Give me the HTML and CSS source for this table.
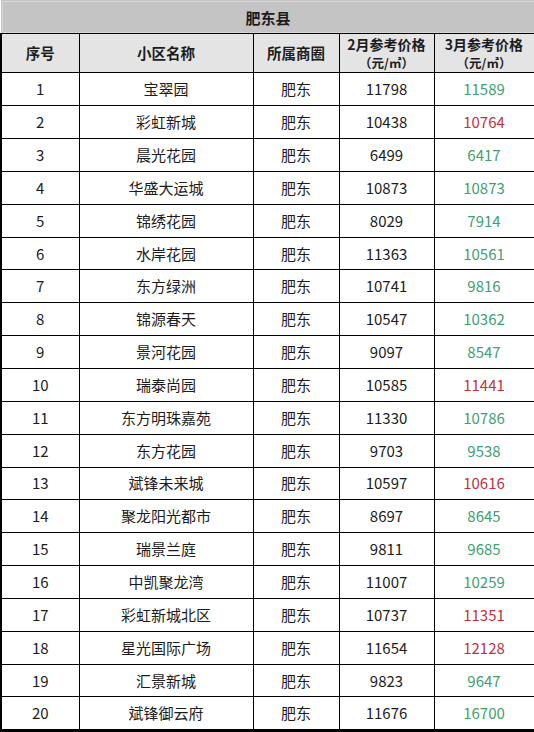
FILE: index.html
```html
<!DOCTYPE html>
<html lang="zh">
<head>
<meta charset="utf-8">
<title>肥东县</title>
<link rel="stylesheet" href="styles.css">
</head>
<body>
<table class="price-table">
  <colgroup>
    <col class="c1"><col class="c2"><col class="c3"><col class="c4"><col class="c5">
  </colgroup>
  <thead>
    <tr class="title-row"><th colspan="5">肥东县</th></tr>
    <tr class="head-row">
      <th>序号</th><th>小区名称</th><th>所属商圈</th>
      <th><span class="h1">2月参考价格</span><span class="unit">（元/㎡）</span></th>
      <th><span class="h1">3月参考价格</span><span class="unit">（元/㎡）</span></th>
    </tr>
  </thead>
  <tbody>
    <tr><td>1</td><td>宝翠园</td><td>肥东</td><td>11798</td><td class="down">11589</td></tr>
    <tr><td>2</td><td>彩虹新城</td><td>肥东</td><td>10438</td><td class="up">10764</td></tr>
    <tr><td>3</td><td>晨光花园</td><td>肥东</td><td>6499</td><td class="down">6417</td></tr>
    <tr><td>4</td><td>华盛大运城</td><td>肥东</td><td>10873</td><td class="down">10873</td></tr>
    <tr><td>5</td><td>锦绣花园</td><td>肥东</td><td>8029</td><td class="down">7914</td></tr>
    <tr><td>6</td><td>水岸花园</td><td>肥东</td><td>11363</td><td class="down">10561</td></tr>
    <tr><td>7</td><td>东方绿洲</td><td>肥东</td><td>10741</td><td class="down">9816</td></tr>
    <tr><td>8</td><td>锦源春天</td><td>肥东</td><td>10547</td><td class="down">10362</td></tr>
    <tr><td>9</td><td>景河花园</td><td>肥东</td><td>9097</td><td class="down">8547</td></tr>
    <tr><td>10</td><td>瑞泰尚园</td><td>肥东</td><td>10585</td><td class="up">11441</td></tr>
    <tr><td>11</td><td>东方明珠嘉苑</td><td>肥东</td><td>11330</td><td class="down">10786</td></tr>
    <tr><td>12</td><td>东方花园</td><td>肥东</td><td>9703</td><td class="down">9538</td></tr>
    <tr><td>13</td><td>斌锋未来城</td><td>肥东</td><td>10597</td><td class="up">10616</td></tr>
    <tr><td>14</td><td>聚龙阳光都市</td><td>肥东</td><td>8697</td><td class="down">8645</td></tr>
    <tr><td>15</td><td>瑞景兰庭</td><td>肥东</td><td>9811</td><td class="down">9685</td></tr>
    <tr><td>16</td><td>中凯聚龙湾</td><td>肥东</td><td>11007</td><td class="down">10259</td></tr>
    <tr><td>17</td><td>彩虹新城北区</td><td>肥东</td><td>10737</td><td class="up">11351</td></tr>
    <tr><td>18</td><td>星光国际广场</td><td>肥东</td><td>11654</td><td class="up">12128</td></tr>
    <tr><td>19</td><td>汇景新城</td><td>肥东</td><td>9823</td><td class="down">9647</td></tr>
    <tr><td>20</td><td>斌锋御云府</td><td>肥东</td><td>11676</td><td class="down">16700</td></tr>
  </tbody>
</table>
</body>
</html>
```
FILE: styles.css
```css
html, body {
  margin: 0;
  padding: 0;
  background: #ffffff;
}
body {
  font-family: "Noto Sans CJK SC", "Noto Sans", sans-serif;
  color: #1c1c1c;
}
.price-table {
  width: 534px;
  table-layout: fixed;
  border-collapse: collapse;
  font-size: 15px;
}
.c1 { width: 78px; }
.c2 { width: 174px; }
.c3 { width: 86px; }
.c4 { width: 95px; }
.c5 { width: 101px; }

.price-table th,
.price-table td {
  border: 1px solid #000;
  text-align: center;
  vertical-align: middle;
  padding: 0;
}
.title-row th {
  height: 32px;
  background: #c4c4c4;
  border-bottom: 1px solid #000;
  font-weight: bold;
  font-size: 15px;
  box-shadow: inset 0 0 0 1px #d6d6d6;
}
.head-row th {
  height: 37px;
  background: #e4e4e4;
  font-weight: bold;
  font-size: 14.5px;
  line-height: 20px;
}
.h1 {
  display: block;
  font-size: 14px;
  line-height: 20.3px;
}
.unit {
  display: block;
  font-size: 12.5px;
  line-height: 18.1px;
}
.price-table tbody td {
  height: 31.85px;
  line-height: 20px;
}
.price-table tr > :first-child { border-left: 2px solid #000; }
.price-table tr > :last-child { border-right: 3px solid #000; }
.price-table .title-row > th { border-left: 1px solid #c4c4c4; border-right: 1px solid #c4c4c4; border-top: 1px solid #c4c4c4; }
.price-table tbody tr:last-child td { border-bottom: 3px solid #000; }
.down { color: #3f9f70; }
.up { color: #c4303e; }
```
